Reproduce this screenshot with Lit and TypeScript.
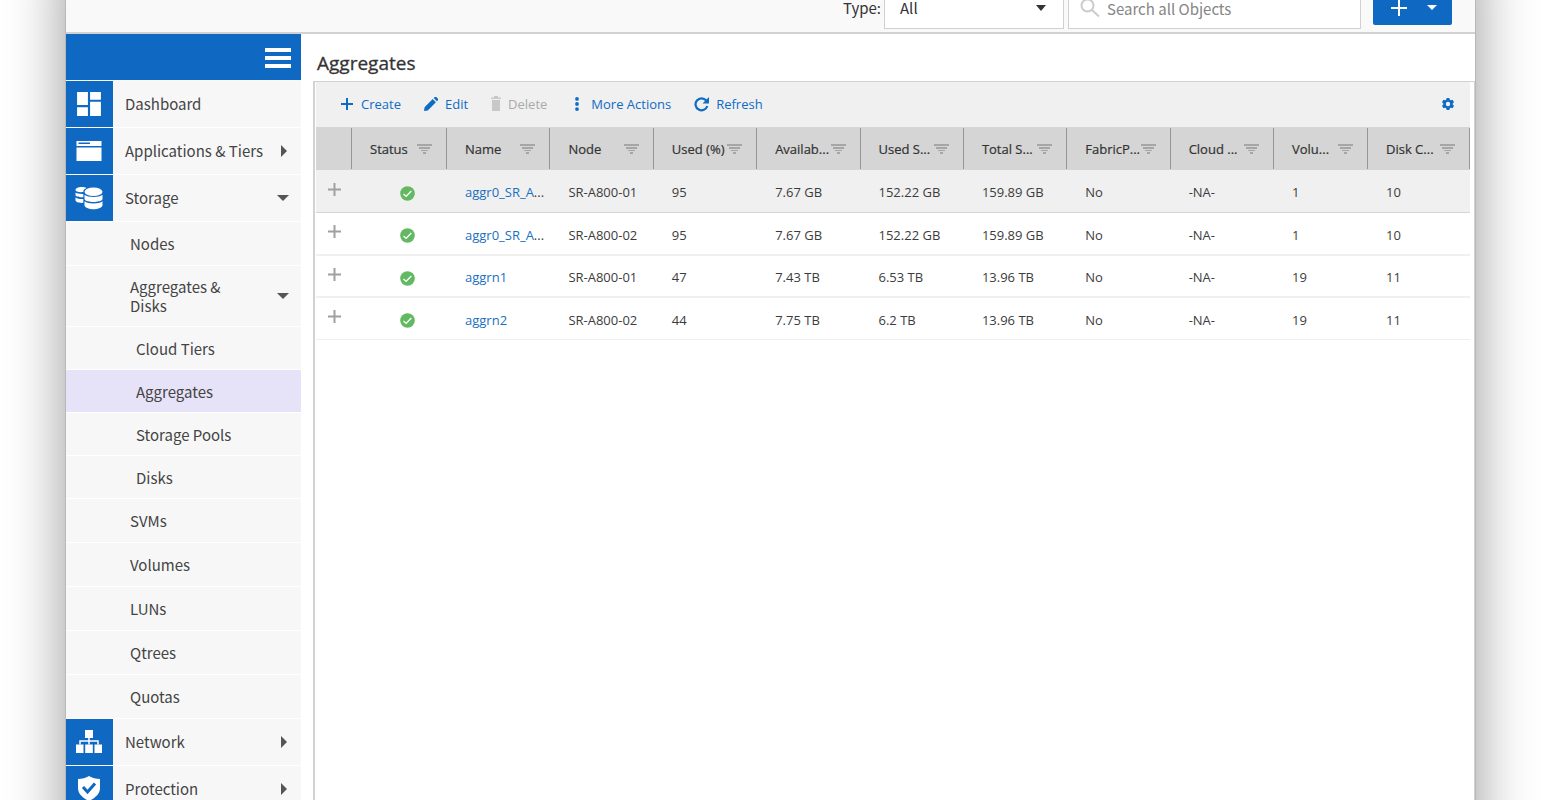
import { LitElement, html, svg, css, nothing } from "lit";
import { customElement, state } from "lit/decorators.js";
import { classMap } from "lit/directives/class-map.js";

const icons = {
  dashboard: svg`<path d="M1 1h10v12H1zM13 1h10v7H13zM1 15h10v8H1zM13 10h10v13H13z"/>`,
  apps: svg`<path fill-rule="evenodd" d="M0 2h25v5H0zM2 3.500h11.500v1.500H2zM0 8.500h25V22H0z"/>`,
  storage: svg`<path d="M0 4c0-2 3-3 6-3 2 0 4 .4 5 1-2 .8-3.200 2-3.200 3.500V6C4 6.500 0 5.700 0 4zM0 6.500c1.800 1.200 4.500 1.600 7.800 1.400v3.300C4 11.500 0 10.500 0 9zM0 11.500c1.800 1.200 4.500 1.700 7.800 1.600v3.700C4 17.200 0 16 0 14.200z"/><ellipse cx="18" cy="5.800" rx="9" ry="4.300"/><path d="M9 8.800c3.500 3 14.500 3 18 0v4.400c-2 3.600-16 3.600-18 0zM9 15.300c3.500 3 14.500 3 18 0v4.200c-2 5-16 5-18 0z"/>`,
  network: svg`<path d="M9 0h8v8H9zM0 14.500h7.500V23H0zM9.200 14.500h7.600V23H9.200zM18.500 14.500H26V23h-7.500z"/><path d="M13 8v6.500M4 14.500V11h18v3.500" fill="none" stroke="currentColor" stroke-width="1.500"/>`,
  shield: svg`<path d="M12 0C9 2 5 3 1 3v9c0 6 5 10 11 13 6-3 11-7 11-13V3C19 3 15 2 12 0z"/><path class="mark" d="M6 11l4.500 5L18 7.500" />`,
};

type Item = { label: string; level: number; icon?: keyof typeof icons; box?: string; arrow?: "right" | "down" };

const NAV: Item[] = [
  { label: "Dashboard", level: 1, icon: "dashboard", box: "0 0 24 24" },
  { label: "Applications & Tiers", level: 1, icon: "apps", box: "0 -1 25 26", arrow: "right" },
  { label: "Storage", level: 1, icon: "storage", box: "0 -1 27 26", arrow: "down" },
  { label: "Nodes", level: 2 },
  { label: "Aggregates & Disks", level: 2, arrow: "down" },
  { label: "Cloud Tiers", level: 3 },
  { label: "Aggregates", level: 3 },
  { label: "Storage Pools", level: 3 },
  { label: "Disks", level: 3 },
  { label: "SVMs", level: 2 },
  { label: "Volumes", level: 2 },
  { label: "LUNs", level: 2 },
  { label: "Qtrees", level: 2 },
  { label: "Quotas", level: 2 },
  { label: "Network", level: 1, icon: "network", box: "0 -1 26 26", arrow: "right" },
  { label: "Protection", level: 1, icon: "shield", box: "0 0 24 26", arrow: "right" },
];

@customElement("side-nav")
export class SideNav extends LitElement {
  @state() private current = "Aggregates";

  static styles = css`
    :host {
      display: block;
      font: 15px/19px "Source Sans Pro", "Noto Sans CJK SC", sans-serif;
      color: #444;
    }
    .head {
      display: flex;
      justify-content: flex-end;
      align-items: center;
      box-sizing: border-box;
      height: 46px;
      padding: 1px 10px 0 0;
      margin-bottom: 1px;
      background: #0f68c2;
    }
    .menu {
      display: grid;
      gap: 4px;
      width: 26px;
      padding: 0;
      border: 0;
      background: none;
      box-sizing: content-box;
    }
    .bar { height: 4px; background: #fff; }
    .list { list-style: none; margin: 0; padding: 0; }
    .item {
      display: flex;
      align-items: center;
      box-sizing: border-box;
      min-height: 44px;
      border-bottom: 1px solid #fff;
      padding-right: 12px;
      background: #f7f7f7;
      color: inherit;
      text-decoration: none;
    }
    .level1 { min-height: 47px; }
    .level1 .label { padding-bottom: 2px; }
    .level2 { padding-left: 64px; }
    .level3 { min-height: 43px; padding-left: 70px; }
    .group { min-height: 61px; }
    .current { background: #e6e2f7; }
    .tile {
      display: flex;
      align-items: center;
      justify-content: center;
      box-sizing: border-box;
      width: 47px;
      height: 46px;
      padding-right: 1px;
      margin-right: 12px;
      background: #0f68c2;
      color: #fff;
    }
    .glyph { width: 28px; height: 26px; fill: currentColor; }
    .mark { fill: none; stroke: #0f68c2; stroke-width: 3; }
    .label { flex: 1; }
    .group .label { flex: none; width: 110px; margin-right: auto; }
    .arrow { width: 12px; height: 12px; fill: #555; }
  `;

  render() {
    return html`
      <div class="head">
        <button class="menu" aria-label="Toggle menu">
          <span class="bar"></span><span class="bar"></span><span class="bar"></span>
        </button>
      </div>
      <nav>
        <ul class="list">
          ${NAV.map(
            (n) => html`<li>
              <a
                href="#"
                class=${classMap({
                  item: true,
                  ["level" + n.level]: true,
                  group: n.level === 2 && !!n.arrow,
                  current: n.level === 3 && n.label === this.current,
                })}
                >${n.icon
                  ? html`<span class="tile"><svg class="glyph" viewBox=${n.box!}>${icons[n.icon]}</svg></span>`
                  : nothing}<span class="label">${n.label}</span>${n.arrow
                  ? html`<svg class="arrow" viewBox="0 0 12 12">
                      ${n.arrow === "right" ? svg`<path d="M4 0l6 6-6 6z"/>` : svg`<path d="M0 3h12L6 9z"/>`}
                    </svg>`
                  : nothing}</a
              >
            </li>`
          )}
        </ul>
      </nav>
    `;
  }
}

const COLUMNS = ["Status", "Name", "Node", "Used (%)", "Availab...", "Used S...", "Total S...", "FabricP...", "Cloud ...", "Volu...", "Disk C..."];

const ROWS = [
  ["aggr0_SR_A", "...", "SR-A800-01", "95", "7.67 GB", "152.22 GB", "159.89 GB", "No", "-NA-", "1", "10"],
  ["aggr0_SR_A", "...", "SR-A800-02", "95", "7.67 GB", "152.22 GB", "159.89 GB", "No", "-NA-", "1", "10"],
  ["aggrn1", "", "SR-A800-01", "47", "7.43 TB", "6.53 TB", "13.96 TB", "No", "-NA-", "19", "11"],
  ["aggrn2", "", "SR-A800-02", "44", "7.75 TB", "6.2 TB", "13.96 TB", "No", "-NA-", "19", "11"],
];

@customElement("aggregate-grid")
export class AggregateGrid extends LitElement {
  static styles = css`
    :host {
      display: block;
      font: 13px/18px "Open Sans", sans-serif;
      color: #3c3c3c;
    }
    button { font: inherit; color: inherit; border: 0; padding: 0; background: none; }
    .toolbar {
      display: flex;
      align-items: center;
      box-sizing: border-box;
      gap: 23px;
      height: 45px;
      padding: 0 16px 2px 24px;
      background: #f0f0f0;
    }
    .action { display: flex; align-items: center; gap: 7px; color: #0f6cc4; }
    .action:disabled { color: #aaa; }
    .action svg { width: 14px; height: 14px; fill: currentColor; }
    .action svg.slim { width: 10px; height: 16px; fill: #c8c8c8; }
    .action svg.round { width: 15px; height: 16px; }
    .settings { display: flex; margin-left: auto; color: #0f6cc4; }
    .settings svg { width: 12px; height: 12px; fill: currentColor; }
    .table { width: 100%; table-layout: fixed; border-collapse: separate; border-spacing: 0; }
    .c-expand { width: 36px; }
    .c-status { width: 95px; }
    .c-volumes { width: 94px; }
    .c-disks { width: 102px; }
    th {
      height: 43px;
      box-sizing: border-box;
      padding: 1px 0 1px 18px;
      background: #d5d5d5;
      font-weight: 400;
      text-align: left;
      white-space: nowrap;
      color: #333;
    }
    .th {
      display: flex;
      align-items: center;
      justify-content: space-between;
      height: 41px;
      padding-right: 14px;
      border-right: 1px solid #969696;
    }
    .heading { -webkit-text-stroke: 0.2px currentColor; }
    .filter { display: flex; flex: none; }
    .filter svg { width: 15px; height: 10px; fill: #a6a6a6; }
    td {
      box-sizing: border-box;
      height: 42px;
      padding: 2px 0 0 18px;
      border-bottom: 2px solid #f0f0f0;
      white-space: nowrap;
    }
    .hot td { height: 43px; background: #f0f0f0; border-bottom: 1px solid #d4d4d4; }
    .last td { border-bottom: 1px solid #eee; }
    .tall td { height: 43px; }
    td.expand { padding: 0 0 4px 12px; line-height: 0; }
    .expand svg { width: 13px; height: 13px; stroke: #a0a0a0; stroke-width: 2; }
    td.status { padding: 4px 0 0 48px; line-height: 0; }
    .status svg { width: 15px; height: 15px; display: block; }
    .link { color: #1a6fc0; text-decoration: none; }
  `;

  render() {
    return html`
      <div class="toolbar">
        <button class="action"><svg viewBox="0 0 14 14"><path d="M6 1h2v5h5v2H8v5H6V8H1V6h5z"/></svg>Create</button>
        <button class="action"><svg viewBox="0 0 14 14"><path d="M0 14l.6-3.800L8.700 2.100l3.200 3.200-8.100 8.100zM9.700 1.100L10.800 0c.5-.4 1-.4 1.500 0L14 1.700c.4.500.4 1 0 1.500l-1.100 1.100z"/></svg>Edit</button>
        <button class="action" disabled><svg class="slim" viewBox="0 0 10 16"><path d="M0 1.500h3V0h4v1.500h3V3H0zM1 4h8v11H1z"/></svg>Delete</button>
        <button class="action"><svg viewBox="0 0 14 14"><circle cx="7" cy="1.900" r="1.900"/><circle cx="7" cy="7" r="1.900"/><circle cx="7" cy="12.100" r="1.900"/></svg>More Actions</button>
        <button class="action"><svg class="round" viewBox="0 0 15 16"><path d="M12.200 4.500A6 6 0 1 0 13.300 10" fill="none" stroke="currentColor" stroke-width="2.200"/><path d="M15 1v6.500H8.500z"/></svg>Refresh</button>
        <button class="settings" aria-label="Table settings"><svg viewBox="0 0 12 12"><path fill-rule="evenodd" d="M4.600 0h2.800l.4 1.700 1 .6 1.700-.5L12 4.200 10.700 5.400v1.200L12 7.800l-1.500 2.400-1.700-.5-1 .6L7.400 12H4.600l-.4-1.700-1-.6-1.700.5L0 7.800l1.300-1.200V5.400L0 4.200l1.500-2.400 1.700.5 1-.6zM6 3.800a2.200 2.200 0 1 0 0 4.400 2.200 2.200 0 0 0 0-4.400z"/></svg></button>
      </div>
      <table class="table">
        <colgroup>
          <col class="c-expand" /><col class="c-status" />
          ${[0, 1, 2, 3, 4, 5, 6, 7].map(() => html`<col />`)}
          <col class="c-volumes" /><col class="c-disks" />
        </colgroup>
        <thead>
          <tr>
            <th><div class="th"></div></th>
            ${COLUMNS.map(
              (c) => html`<th scope="col">
                <div class="th">
                  <span class="heading">${c}</span>
                  <button class="filter" aria-label="Filter">
                    <svg viewBox="0 0 15 10"><path d="M0 0h15v2H0zM2 3h11v2H2zM4 6h7v1H4zM6 8h3v2H6z"/></svg>
                  </button>
                </div>
              </th>`
            )}
          </tr>
        </thead>
        <tbody>
          ${ROWS.map(
            ([name, more, ...cells], i) => html`<tr class=${classMap({ hot: i === 0, tall: i === 1, last: i === ROWS.length - 1 })}>
              <td class="expand">
                <button aria-label="Expand row"><svg viewBox="0 0 13 13"><path d="M6.500 0v13M0 6.500h13"/></svg></button>
              </td>
              <td class="status">
                <svg viewBox="0 0 15 15" role="img" aria-label="Online"><circle cx="7.500" cy="7.500" r="7.300" fill="#63b862"/><path d="M3.500 8l2.600 2.400 5.200-5.300" fill="none" stroke="#fff" stroke-width="1.400"/></svg>
              </td>
              <td><a class="link" href="#">${name}</a>${more}</td>
              ${cells.map((c) => html`<td>${c}</td>`)}
            </tr>`
          )}
        </tbody>
      </table>
    `;
  }
}

@customElement("app-root")
export class AppRoot extends LitElement {
  static styles = css`
    :host {
      display: block;
      height: 100vh;
      overflow: hidden;
      background: #fff;
      font: 15px/20px "Source Sans Pro", "Noto Sans CJK SC", sans-serif;
      color: #333;
    }
    .window {
      display: flex;
      flex-direction: column;
      box-sizing: border-box;
      min-height: calc(100vh + 160px);
      margin: -80px 66px;
      padding-top: 64px;
      background: #f9f9f9;
      box-shadow: 0 0 1px rgba(0, 0, 0, 0.5), 0 30px 56px rgba(0, 0, 0, 0.42);
    }
    .topbar {
      display: flex;
      align-items: center;
      justify-content: flex-end;
      height: 48px;
      padding-right: 23px;
      border-bottom: 2px solid #d2d2d2;
    }
    .pick, .search {
      position: relative;
      display: flex;
      align-items: center;
      height: 42px;
      box-sizing: border-box;
      border: 1px solid #d0d0d0;
      background: #fff;
    }
    .pick { width: 180px; margin: 0 4px 0 3px; }
    .search { width: 293px; margin-right: 12px; padding-left: 11px; gap: 7px; }
    .select, .input {
      appearance: none;
      flex: 1;
      min-width: 0;
      height: 100%;
      border: 0;
      margin: 0;
      padding: 0 0 0 15px;
      background: none;
      font: inherit;
      color: inherit;
      outline: none;
    }
    .input { padding-left: 0; }
    .input::placeholder { color: #858585; opacity: 1; }
    .caret { position: absolute; right: 17px; width: 10px; height: 6px; fill: #333; pointer-events: none; }
    .lens { width: 20px; height: 20px; fill: none; stroke: #ccc; stroke-width: 2; }
    .add {
      display: flex;
      align-items: center;
      justify-content: space-between;
      width: 79px;
      height: 35px;
      margin-bottom: 1px;
      padding: 0 15px 0 18px;
      border: 0;
      border-radius: 2px;
      background: #0f68c2;
      fill: #fff;
    }
    .plus { width: 16px; height: 16px; }
    .tip { width: 10px; height: 5px; }
    .body { display: flex; flex: 1; }
    .side { flex: none; width: 235px; }
    .main { display: flex; flex-direction: column; flex: 1; min-width: 0; padding-left: 12px; background: #fff; }
    .title {
      margin: 0;
      padding: 16px 0 5px 4px;
      font: 19px/26px "Open Sans", sans-serif;
      -webkit-text-stroke: 0.3px currentColor;
    }
    .panel {
      flex: 1;
      padding: 0 4px 0 1px;
      border: solid #d2d2d2;
      border-width: 1px 1px 0 2px;
    }
  `;

  render() {
    return html`
      <div class="window">
        <header class="topbar">
          <label for="type">Type:</label>
          <div class="pick">
            <select class="select" id="type"><option>All</option></select>
            <svg class="caret" viewBox="0 0 10 6"><path d="M0 0h10L5 6z"/></svg>
          </div>
          <div class="search">
            <svg class="lens" viewBox="0 0 20 20"><circle cx="7.500" cy="7.500" r="6"/><path d="M12 12l7 6.500"/></svg>
            <input class="input" type="text" aria-label="Search" placeholder="Search all Objects" />
          </div>
          <button class="add" aria-label="Add">
            <svg class="plus" viewBox="0 0 16 16"><path d="M7 0h2v7h7v2H9v7H7V9H0V7h7z"/></svg>
            <svg class="tip" viewBox="0 0 10 5"><path d="M0 0h10L5 5z"/></svg>
          </button>
        </header>
        <div class="body">
          <side-nav class="side"></side-nav>
          <main class="main">
            <h1 class="title">Aggregates</h1>
            <section class="panel"><aggregate-grid></aggregate-grid></section>
          </main>
        </div>
      </div>
    `;
  }
}
